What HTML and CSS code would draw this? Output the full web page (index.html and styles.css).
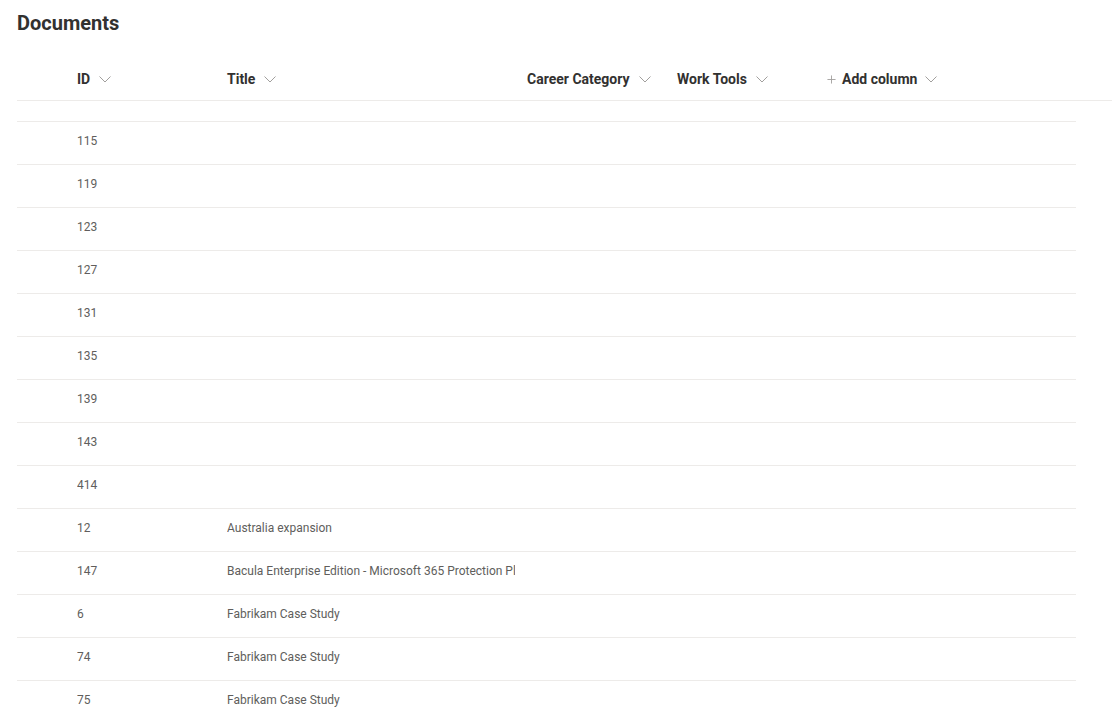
FILE: index.html
```html
<!DOCTYPE html>
<html>
<head>
<meta charset="utf-8">
<link rel="stylesheet" href="styles.css">
</head>
<body>
<div class="page">
  <h1 class="title">Documents</h1>
  <div class="header">
    <div class="hcell"></div>
    <div class="hcell"><span>ID</span><svg class="chev" viewBox="0 0 12 7"><path d="M0.5 0.5 L6 6 L11.5 0.5"/></svg></div>
    <div class="hcell"><span>Title</span><svg class="chev" viewBox="0 0 12 7"><path d="M0.5 0.5 L6 6 L11.5 0.5"/></svg></div>
    <div class="hcell"><span>Career Category</span><svg class="chev" viewBox="0 0 12 7"><path d="M0.5 0.5 L6 6 L11.5 0.5"/></svg></div>
    <div class="hcell"><span>Work Tools</span><svg class="chev" viewBox="0 0 12 7"><path d="M0.5 0.5 L6 6 L11.5 0.5"/></svg></div>
    <div class="hcell add"><svg class="plus" viewBox="0 0 10 10"><path d="M5 0.5 V9.5 M0.5 5 H9.5"/></svg><span>Add column</span><svg class="chev" viewBox="0 0 12 7"><path d="M0.5 0.5 L6 6 L11.5 0.5"/></svg></div>
  </div>
  <div class="rows">
    <div class="row partial"></div>
    <div class="row"><div></div><div class="cell">115</div><div class="cell"></div></div>
    <div class="row"><div></div><div class="cell">119</div><div class="cell"></div></div>
    <div class="row"><div></div><div class="cell">123</div><div class="cell"></div></div>
    <div class="row"><div></div><div class="cell">127</div><div class="cell"></div></div>
    <div class="row"><div></div><div class="cell">131</div><div class="cell"></div></div>
    <div class="row"><div></div><div class="cell">135</div><div class="cell"></div></div>
    <div class="row"><div></div><div class="cell">139</div><div class="cell"></div></div>
    <div class="row"><div></div><div class="cell">143</div><div class="cell"></div></div>
    <div class="row"><div></div><div class="cell">414</div><div class="cell"></div></div>
    <div class="row"><div></div><div class="cell">12</div><div class="cell">Australia expansion</div></div>
    <div class="row"><div></div><div class="cell">147</div><div class="cell">Bacula Enterprise Edition - Microsoft 365 Protection Pl</div></div>
    <div class="row"><div></div><div class="cell">6</div><div class="cell">Fabrikam Case Study</div></div>
    <div class="row"><div></div><div class="cell">74</div><div class="cell">Fabrikam Case Study</div></div>
    <div class="row"><div></div><div class="cell">75</div><div class="cell">Fabrikam Case Study</div></div>
  </div>
</div>
</body>
</html>
```
FILE: styles.css
```css
html, body {
  margin: 0;
  padding: 0;
  background: #ffffff;
  overflow: hidden;
}
body {
  font-family: Roboto, "Liberation Sans", sans-serif;
  color: #323130;
}
.page {
  padding-left: 17px;
  height: 708px;
  overflow: hidden;
}
.title {
  margin: 0;
  padding-top: 9px;
  height: 37px;
  line-height: 28px;
  font-size: 20px;
  font-weight: 700;
  color: #323130;
}
.header {
  margin-top: 12px;
  height: 42px;
  display: grid;
  grid-template-columns: 60px 150px 300px 150px 150px 1fr;
  align-items: center;
  border-bottom: 1px solid #edebe9;
}
.hcell {
  display: flex;
  align-items: center;
  gap: 9px;
  font-size: 14px;
  font-weight: 700;
  line-height: 20px;
  color: #323130;
}
.hcell.add {
  gap: 0;
}
.hcell.add .plus {
  margin-right: 6px;
}
.hcell.add .chev {
  margin-left: 8px;
}
.chev {
  width: 12px;
  height: 7px;
  fill: none;
  stroke: #a19f9d;
  stroke-width: 1;
  margin-top: 1px;
}
.plus {
  width: 9px;
  height: 9px;
  fill: none;
  stroke: #a19f9d;
  stroke-width: 1;
}
.rows {
  width: 1059px;
}
.row {
  height: 42px;
  display: grid;
  grid-template-columns: 60px 150px 288px;
  column-gap: 0;
  border-bottom: 1px solid #edebe9;
}
.row.partial {
  height: 20px;
}
.cell {
  padding-top: 11px;
  font-size: 12px;
  line-height: 16px;
  color: #605e5c;
  white-space: nowrap;
  overflow: hidden;
}
```
